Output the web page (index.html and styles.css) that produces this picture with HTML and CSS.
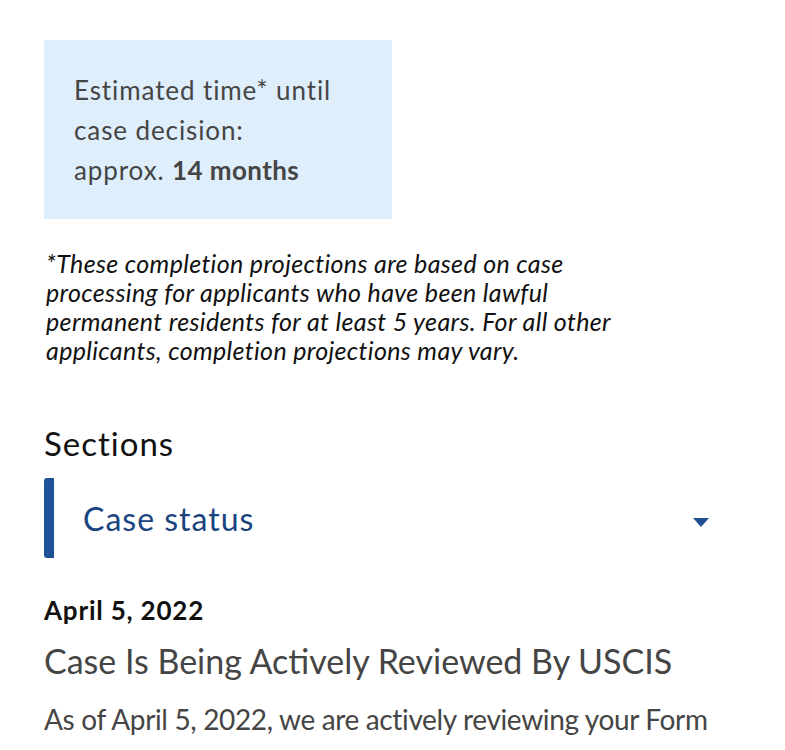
FILE: index.html
```html
<!DOCTYPE html>
<html lang="en">
<head>
<meta charset="utf-8">
<title>Case status</title>
<link rel="stylesheet" href="styles.css">
</head>
<body>
<main class="page">
  <div class="estimate">
    <p>Estimated time* until<br>case decision:<br>approx. <strong>14 months</strong></p>
  </div>
  <p class="footnote">*These completion projections are based on case<br>processing for applicants who have been lawful<br>permanent residents for at least 5 years. For all other<br>applicants, completion projections may vary.</p>
  <h2 class="sections-title">Sections</h2>
  <button class="accordion" type="button">
    <span class="accordion-label">Case status</span>
    <svg class="caret" width="16" height="9" viewBox="0 0 16 9" aria-hidden="true"><path d="M0 0 H16 L8 9 Z" fill="#1f4f8f"/></svg>
  </button>
  <div class="status">
    <div class="status-date">April 5, 2022</div>
    <h3 class="status-title">Case Is Being Actively Reviewed By USCIS</h3>
    <p class="status-text">As of April 5, 2022, we are actively reviewing your Form<br>N-400, Application for Naturalization. Our records show</p>
  </div>
</main>
</body>
</html>
```
FILE: styles.css
```css
html, body {
  margin: 0;
  padding: 0;
  background: #ffffff;
}
body {
  height: 750px;
  overflow: hidden;
  font-family: Lato, "Open Sans", "Liberation Sans", sans-serif;
  color: #1b1b1b;
}
.page {
  padding: 40px 44px 0 44px;
}
.estimate {
  width: 348px;
  height: 179px;
  box-sizing: border-box;
  background: #dfeefb;
  padding: 30px 20px 0 30px;
}
.estimate p {
  margin: 0;
  font-size: 26px;
  line-height: 40px;
  letter-spacing: 0.9px;
  color: #454545;
}
.estimate strong {
  font-weight: 700;
  letter-spacing: 0.4px;
}
.footnote {
  margin: 30px 0 0 2px;
  font-size: 25px;
  line-height: 29px;
  font-style: italic;
  letter-spacing: 0.35px;
  color: #111;
  white-space: nowrap;
}
.sections-title {
  margin: 58px 0 0 0;
  font-size: 33px;
  line-height: 40px;
  font-weight: 400;
  letter-spacing: 1px;
  color: #111;
}
.accordion {
  display: flex;
  align-items: center;
  justify-content: space-between;
  width: 100%;
  height: 80px;
  margin-top: 15px;
  padding: 0 32px 0 29px;
  border: 0;
  border-left: 10px solid #1f5299;
  border-radius: 3px 0 0 3px;
  background: transparent;
  font-family: inherit;
  box-sizing: border-box;
  cursor: pointer;
}
.accordion-label {
  font-size: 32px;
  letter-spacing: 1px;
  color: #1a4480;
}
.caret {
  margin-top: 8px;
}
.status {
  margin-top: 36px;
}
.status-date {
  font-size: 26px;
  line-height: 32px;
  font-weight: 700;
  letter-spacing: 0.8px;
  color: #111;
}
.status-title {
  margin: 14px 0 0 0;
  font-size: 34px;
  line-height: 42px;
  font-weight: 400;
  color: #454545;
}
.status-text {
  margin: 15px 0 0 0;
  font-size: 28px;
  line-height: 44px;
  letter-spacing: -0.35px;
  color: #454545;
  white-space: nowrap;
}
```
